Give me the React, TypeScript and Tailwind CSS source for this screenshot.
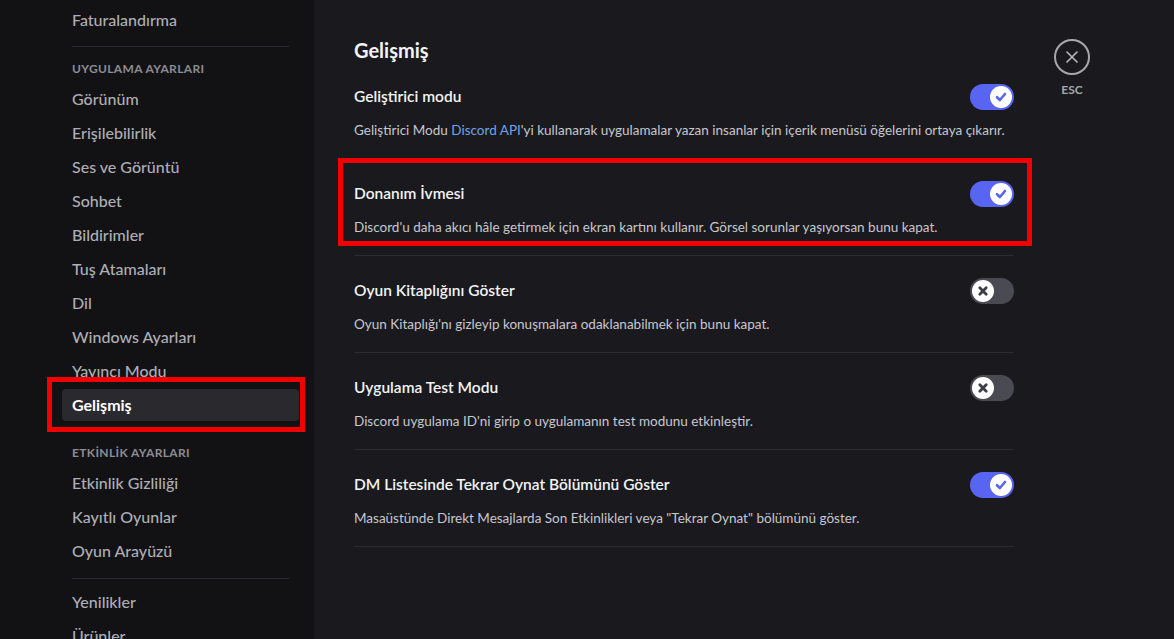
import React from "react";

type NavEntry =
  | { kind: "item"; label: string; selected?: boolean }
  | { kind: "header"; label: string; className: string }
  | { kind: "divider"; className: string };

const nav: NavEntry[] = [
  { kind: "item", label: "Faturalandırma" },
  { kind: "divider", className: "mt-[8px]" },
  { kind: "header", label: "UYGULAMA AYARLARI", className: "pt-[14px] pb-[6px]" },
  { kind: "item", label: "Görünüm" },
  { kind: "item", label: "Erişilebilirlik" },
  { kind: "item", label: "Ses ve Görüntü" },
  { kind: "item", label: "Sohbet" },
  { kind: "item", label: "Bildirimler" },
  { kind: "item", label: "Tuş Atamaları" },
  { kind: "item", label: "Dil" },
  { kind: "item", label: "Windows Ayarları" },
  { kind: "item", label: "Yayıncı Modu" },
  { kind: "item", label: "Gelişmiş", selected: true },
  { kind: "header", label: "ETKİNLİK AYARLARI", className: "pt-[22px] pb-[6px]" },
  { kind: "item", label: "Etkinlik Gizliliği" },
  { kind: "item", label: "Kayıtlı Oyunlar" },
  { kind: "item", label: "Oyun Arayüzü" },
  { kind: "divider", className: "mt-[9px] mb-[7px]" },
  { kind: "item", label: "Yenilikler" },
  { kind: "item", label: "Ürünler" },
];

type Setting = {
  title: string;
  desc: React.ReactNode;
  on: boolean;
};

const settings: Setting[] = [
  {
    title: "Geliştirici modu",
    desc: (
      <>
        Geliştirici Modu <span className="text-[#6ea3ec]">Discord API</span>'yi kullanarak uygulamalar yazan
        insanlar için içerik menüsü öğelerini ortaya çıkarır.
      </>
    ),
    on: true,
  },
  {
    title: "Donanım İvmesi",
    desc: "Discord'u daha akıcı hâle getirmek için ekran kartını kullanır. Görsel sorunlar yaşıyorsan bunu kapat.",
    on: true,
  },
  {
    title: "Oyun Kitaplığını Göster",
    desc: "Oyun Kitaplığı'nı gizleyip konuşmalara odaklanabilmek için bunu kapat.",
    on: false,
  },
  {
    title: "Uygulama Test Modu",
    desc: "Discord uygulama ID'ni girip o uygulamanın test modunu etkinleştir.",
    on: false,
  },
  {
    title: "DM Listesinde Tekrar Oynat Bölümünü Göster",
    desc: 'Masaüstünde Direkt Mesajlarda Son Etkinlikleri veya "Tekrar Oynat" bölümünü göster.',
    on: true,
  },
];

function Toggle({ on }: { on: boolean }) {
  return (
    <div
      className={`flex h-[26px] w-[44px] shrink-0 items-center rounded-full px-[2px] ${
        on ? "justify-end bg-[#5865f2]" : "justify-start bg-[#4a4b52]"
      }`}
    >
      <div className="flex h-[22px] w-[22px] items-center justify-center rounded-full bg-white">
        {on ? (
          <svg width="14" height="14" viewBox="0 0 14 14" fill="none">
            <path
              d="M3 7.2 L5.9 10 L11 4"
              stroke="#5865f2"
              strokeWidth="2.6"
              strokeLinecap="round"
              strokeLinejoin="round"
            />
          </svg>
        ) : (
          <svg width="14" height="14" viewBox="0 0 14 14" fill="none">
            <path
              d="M3.8 3.8 L10.2 10.2 M10.2 3.8 L3.8 10.2"
              stroke="#3d3e45"
              strokeWidth="2.8"
              strokeLinecap="round"
            />
          </svg>
        )}
      </div>
    </div>
  );
}

export default function App() {
  return (
    <div
      className="flex h-[639px] w-[1174px] overflow-hidden bg-[#1a1a1e]"
      style={{ fontFamily: 'Lato, "Noto Sans", sans-serif' }}
    >
      {/* sidebar */}
      <aside className="relative h-full w-[314px] shrink-0 overflow-hidden bg-[#121214] pl-[62px] pr-[15px] pt-[4px]">
        <nav className="flex flex-col">
          {nav.map((e, i) => {
            if (e.kind === "divider")
              return <div key={i} className={`mx-[10px] h-px bg-[#2a2a2f] ${e.className}`} />;
            if (e.kind === "header")
              return (
                <div
                  key={i}
                  className={`px-[10px] text-[12px] font-bold leading-4 tracking-[0.03em] text-[#8c8c94] ${e.className}`}
                >
                  {e.label}
                </div>
              );
            return (
              <div
                key={i}
                className={`mb-[2px] flex h-8 shrink-0 items-center rounded-[4px] px-[10px] text-[16px] ${
                  e.selected ? "bg-[#29292e] font-bold text-white" : "font-medium text-[#aeaeb6]"
                }`}
              >
                {e.label}
              </div>
            );
          })}
        </nav>
        {/* highlight frame around the selected entry */}
        <div className="pointer-events-none absolute left-[47px] top-[377px] h-[55px] w-[258px] border-[5px] border-[#f20000]" />
      </aside>

      {/* content */}
      <main className="relative flex flex-1 pl-[40px] pt-[38px]">
        <section className="w-[660px] shrink-0">
          <h2 className="mb-[22px] text-[20px] font-bold leading-6 text-[#f2f3f5]">Gelişmiş</h2>
          {settings.map((s, i) => (
            <div key={i}>
              <div className="flex h-[26px] items-center justify-between">
                <div className="text-[15.5px] font-semibold text-[#f2f3f5]">{s.title}</div>
                <Toggle on={s.on} />
              </div>
              <p className="mt-[10px] whitespace-nowrap text-[13.5px] leading-5 text-[#c7c7ce]">{s.desc}</p>
              <div className="mb-[22px] mt-[18px] h-px bg-[#2c2c31]" />
            </div>
          ))}
        </section>

        <div className="ml-[40px] flex flex-col items-center">
          <div className="mt-px flex h-9 w-9 items-center justify-center rounded-full border-2 border-[#a6a6ad]">
            <svg width="14" height="14" viewBox="0 0 14 14" fill="none">
              <path d="M2 2 L12 12 M12 2 L2 12" stroke="#b8b8bf" strokeWidth="1.6" strokeLinecap="round" />
            </svg>
          </div>
          <div className="mt-[6px] text-[12px] font-bold text-[#a6a6ad]">ESC</div>
        </div>

        {/* highlight frame around the hardware acceleration row */}
        <div className="pointer-events-none absolute left-[24px] top-[158px] h-[88px] w-[694px] border-[5px] border-[#f20000]" />
      </main>
    </div>
  );
}
